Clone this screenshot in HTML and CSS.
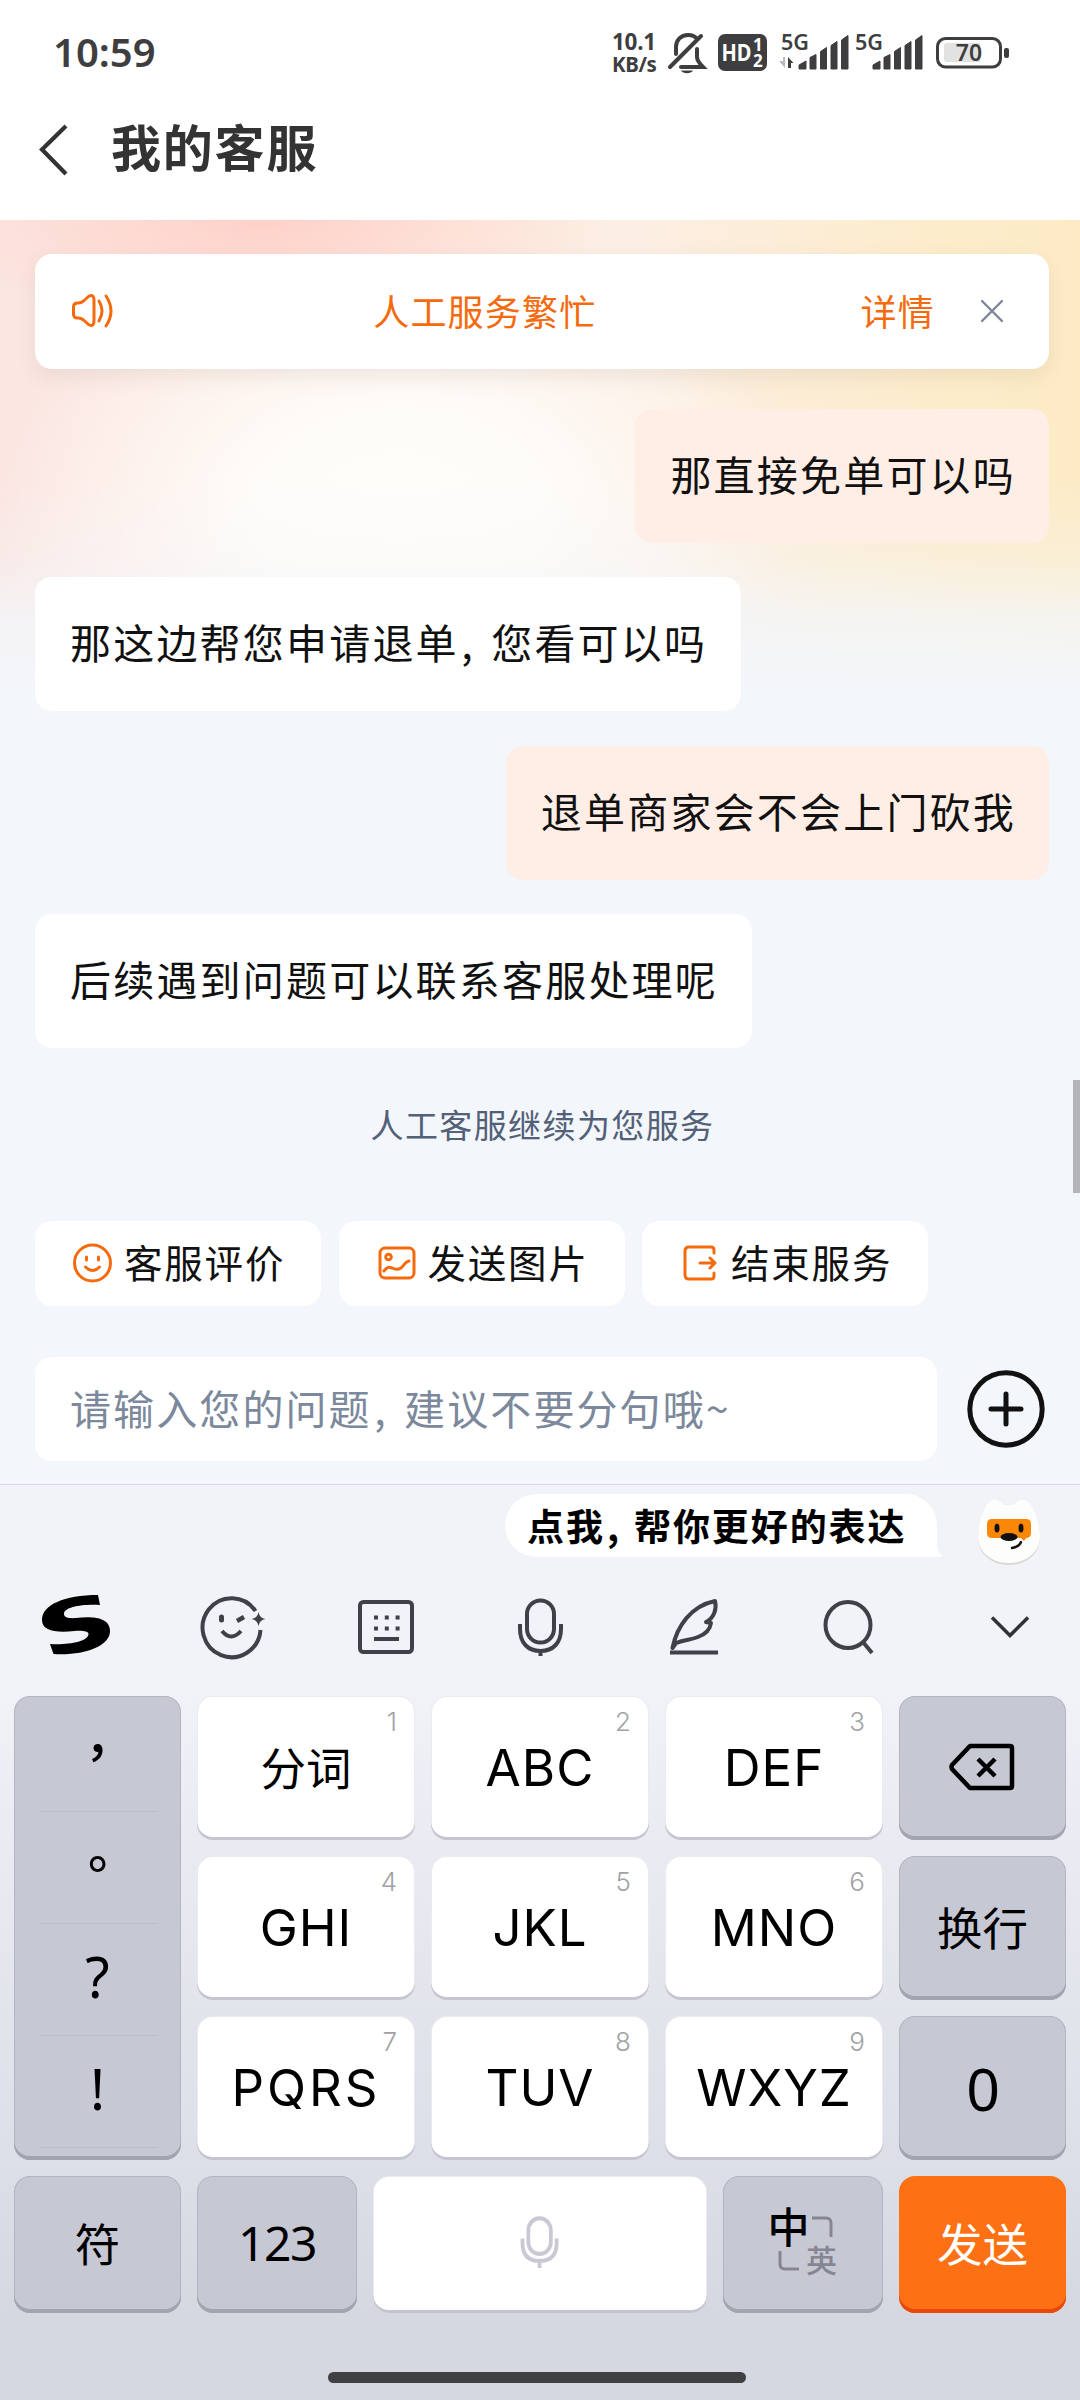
FILE: index.html
```html
<!DOCTYPE html>
<html lang="zh-CN">
<head>
<meta charset="utf-8">
<title>我的客服</title>
<link rel="stylesheet" href="styles.css">
</head>
<body>
<div class="phone">
  <div class="status">
    <span class="clock">10:59</span>
    <div class="indicators">
      <div class="speed"><span>10.1</span><span>KB/s</span></div>
      <svg class="bell" width="38" height="42" viewBox="0 0 38 42" fill="none" stroke="#3e3e40" stroke-width="4" stroke-linecap="round">
        <path d="M8 22V15C8 8 13 3 20 3c4 0 7 1 9 4M2 35 33 4M29 17v8c0 3 4 8 6 10H13"/>
        <path d="M13 38.500h12c-2 3.500-10 3.500-12 0z" fill="#3e3e40" stroke="none"/>
      </svg>
      <svg class="hd" width="49" height="37" viewBox="0 0 49 37">
        <rect width="49" height="37" rx="7" fill="#3e3e40"/>
        <g fill="#fff" font-family="Noto Sans, sans-serif" font-weight="700">
          <text x="3.500" y="27" font-size="22.500" textLength="30" lengthAdjust="spacingAndGlyphs">HD</text>
          <text x="35" y="17" font-size="17">1</text>
          <text x="35" y="33" font-size="17">2</text>
        </g>
      </svg>
      <svg class="signal" width="72" height="38" viewBox="0 0 72 38">
        <text x="2" y="17" font-size="21" textLength="28" lengthAdjust="spacingAndGlyphs" font-family="Noto Sans, sans-serif" font-weight="600" fill="#3e3e40">5G</text>
        <path d="M6 24v11l-6-7h4v-4z" fill="#bbb"/><path d="M9 35V24l5.500 6H12v5z" fill="#3e3e40"/>
        <path d="M20 32l7-4v8h-7zM31 24.500l6-3V36h-6zM41.500 18.500l6-4V36h-6zM52 12.500l6-4V36h-6zM62.500 7l6.500-4.500V36h-6.500z" fill="#3e3e40" stroke="#3e3e40" stroke-width="1" stroke-linejoin="round"/>
      </svg>
      <svg class="signal" width="74" height="38" viewBox="0 0 74 38">
        <text x="4" y="17" font-size="21" textLength="28" lengthAdjust="spacingAndGlyphs" font-family="Noto Sans, sans-serif" font-weight="600" fill="#3e3e40">5G</text>
        <path transform="translate(2 0)" d="M20 32l7-4v8h-7zM31 24.500l6-3V36h-6zM41.500 18.500l6-4V36h-6zM52 12.500l6-4V36h-6zM62.500 7l6.500-4.500V36h-6.500z" fill="#3e3e40" stroke="#3e3e40" stroke-width="1" stroke-linejoin="round"/>
      </svg>
      <svg class="battery" width="74" height="32" viewBox="0 0 74 32">
        <rect x="1.500" y="1.500" width="63" height="28.500" rx="8" fill="none" stroke="#3e3e40" stroke-width="3"/>
        <path d="M11 6h33v19H11a3 3 0 0 1-3-3V9a3 3 0 0 1 3-3z" fill="#e2e2e2"/>
        <rect x="68" y="11" width="5" height="10" rx="2" fill="#3e3e40"/>
        <text x="33" y="24" text-anchor="middle" font-size="23" font-family="Noto Sans, sans-serif" font-weight="600" fill="#3e3e40">70</text>
      </svg>
    </div>
  </div>

  <header class="nav">
    <svg width="30" height="52" viewBox="0 0 30 52" fill="none" stroke="#333" stroke-width="4.200"><path d="M28 2 4 25.500 28 50"/></svg>
    <h1>我的客服</h1>
  </header>

  <main class="chat">
    <div class="notice">
      <svg width="44" height="36" viewBox="0 0 44 36" fill="none" stroke="#f56a0c" stroke-width="3" stroke-linecap="round" stroke-linejoin="round">
        <path d="M3.500 14q0-4 4-4 3 .5 6-2l5-4.500q5.500-3 5.500 4v20q0 7-5.500 4l-5-4.500q-3-2.500-6-2-4 0-4-4z"/><path d="M29 8q6 9.500 0 20M36 3q10 15 0 30"/>
      </svg>
      <span class="notice-title">人工服务繁忙</span>
      <span class="notice-link">详情</span>
      <svg width="24" height="24" viewBox="0 0 24 24" stroke="#7b8797" stroke-width="2.400" stroke-linecap="round"><path d="M2 2 22 22M22 2 2 22"/></svg>
    </div>
    <div class="bubble mine">那直接免单可以吗</div>
    <div class="bubble">那这边帮您申请退单<i class="comma">,</i>您看可以吗</div>
    <div class="bubble mine">退单商家会不会上门砍我</div>
    <div class="bubble">后续遇到问题可以联系客服处理呢</div>
    <p class="system">人工客服继续为您服务</p>
    <div class="scrollbar"></div>
    <div class="quick">
      <div class="chip">
        <svg width="40" height="40" viewBox="0 0 40 40" fill="none" stroke="#f56a0c" stroke-width="3" stroke-linecap="round"><circle cx="20.500" cy="20" r="18"/><path d="M14.500 14v3M26.500 14v3M13.500 24q7 7 14 0"/></svg><span>客服评价</span>
      </div>
      <div class="chip">
        <svg width="40" height="40" viewBox="0 0 40 40" fill="none" stroke="#f56a0c" stroke-width="3" stroke-linecap="round" stroke-linejoin="round"><rect x="4" y="5" width="34" height="30" rx="5"/><circle cx="12.500" cy="14" r="2.800"/><path d="M8 28c4-5 5-4 8-3 4 2 6 2 9 0 4-3 3-6 8-7"/></svg><span>发送图片</span>
      </div>
      <div class="chip">
        <svg width="40" height="40" viewBox="0 0 40 40" fill="none" stroke="#f56a0c" stroke-width="3" stroke-linecap="round" stroke-linejoin="round"><path d="M35 10V7q0-3-3-3H10Q6 4 6 8v24q0 4 4 4h22q3 0 3-3v-3M21 20h15M31 15l5 5-5 5"/></svg><span>结束服务</span>
      </div>
    </div>
    <div class="compose">
      <div class="field">请输入您的问题<i class="comma">,</i>建议不要分句哦~</div>
      <svg width="78" height="78" viewBox="0 0 78 78" fill="none" stroke="#111" stroke-width="5" stroke-linecap="round"><circle cx="39" cy="39" r="36.200"/><path d="M39 24v30M24 39h30"/></svg>
    </div>
  </main>

  <section class="keyboard">
    <div class="assist">
      <div class="tip">点我<i class="comma">,</i>帮你更好的表达
        <svg class="tail" width="10" height="14" viewBox="0 0 10 14"><path d="M0 0h5q0 9 5 12.500V14H0z" fill="#fff"/></svg>
      </div>
      <svg class="mascot" width="66" height="70" viewBox="0 0 66 70">
        <path d="M8 15Q13 0 23 5l5 4h9l5-4q10-5 16 10c4 8 6 18 6 26 0 15-13 27-31 27S2 56 2 41C2 32 4 22 8 15z" fill="#d9d9d6"/>
        <path d="M8 14Q13-1 23 4l5 4h9l5-4q10-5 16 10c4 8 6 18 6 26 0 14-13 26-31 26S2 54 2 40C2 31 4 21 8 14z" fill="#fdfdfb"/>
        <path d="M16 22h34q5 0 5 5v9q0 5-5 5l-2 3-3-3H16q-5 0-5-5v-9q0-5 5-5z" fill="#fb8706"/>
        <ellipse cx="21" cy="31" rx="2.500" ry="4.500" fill="#111"/><ellipse cx="45" cy="31" rx="2.500" ry="4.500" fill="#111"/>
        <ellipse cx="33" cy="40" rx="8.500" ry="4" fill="#111"/><path d="M36 51q7-1 9-6" fill="none" stroke="#111" stroke-width="2.400" stroke-linecap="round"/>
      </svg>
    </div>

    <div class="tools">
      <svg class="brand" width="70" height="62" viewBox="0 0 70 62"><path transform="translate(1 1)" d="M56 0 58 10C40 9 22 12 22 19c0 4 6 4.500 12 4C50 21 68 22 68 36 68 52 40 61 11.500 59L8 49c18 1 38-2 38.500-10 0-3-6-3.500-14-3C14 38 0 36 0 25 0 10 22 0 56 0z"/></svg>
      <svg width="68" height="66" viewBox="0 0 68 66" fill="none" stroke="#404148" stroke-width="4"><path d="M55.500 17A29 29.500 0 1 0 60.500 36M22 37q9 11 19 0"/><path d="M21.500 23v3" stroke-width="5" stroke-linecap="round"/><path d="M37 27l7-4" stroke-width="4.500"/><path d="M58.500 18q1 6 7 7-6 1-7 7-1-6-7-7 6-1 7-7z" fill="#404148" stroke="none"/></svg>
      <svg width="58" height="56" viewBox="0 0 58 56" fill="none" stroke="#404148" stroke-width="4"><rect x="3" y="3" width="52" height="50" rx="3.500"/><path d="M17 40h25"/><path d="M17 18.500h26M17 29.500h26" stroke-dasharray="4 6.800"/></svg>
      <svg width="48" height="58" viewBox="0 0 48 58" fill="none" stroke="#404148" stroke-width="4"><rect x="10" y="2.500" width="27" height="42" rx="13.500"/><path d="M3 26v5c0 14 8 22 20.500 22S44 45 44 31v-5M23.500 52v6"/></svg>
      <svg width="50" height="58" viewBox="0 0 50 58" fill="none" stroke="#404148" stroke-width="4" stroke-linejoin="round"><path d="M1 54.500h48M3.500 50C8 28 22 8 46 3c2 8-1 17-9 21l5 1c-1 7-5 11-13 14-8 3-15 3-22 6z" /></svg>
      <svg width="52" height="56" viewBox="0 0 52 56" fill="none" stroke="#404148" stroke-width="4"><ellipse cx="25" cy="26" rx="22.500" ry="23"/><path d="M40 43l9 11"/></svg>
      <svg width="40" height="24" viewBox="0 0 40 24" fill="none" stroke="#303136" stroke-width="3.500"><path d="M2 2.500 20 20.500 38 2.500"/></svg>
    </div>

    <div class="pad">
      <div class="key grey punct"><span class="cjk">，</span><span class="cjk">。</span><span>?</span><span>!</span></div>
      <div class="key"><sup>1</sup><span class="han">分词</span></div>
      <div class="key"><sup>2</sup>ABC</div>
      <div class="key"><sup>3</sup>DEF</div>
      <div class="key grey"><svg width="66" height="50" viewBox="0 0 66 50" fill="none" stroke="#000" stroke-width="4.500" stroke-linejoin="round"><path d="M20 3h40q2 0 2 2v38q0 2-2 2H20L2 26q-1-2 0-4z"/><path d="M28 16l17 17M45 16 28 33"/></svg></div>
      <div class="key"><sup>4</sup>GHI</div>
      <div class="key"><sup>5</sup>JKL</div>
      <div class="key"><sup>6</sup>MNO</div>
      <div class="key grey"><span class="han">换行</span></div>
      <div class="key wide"><sup>7</sup>PQRS</div>
      <div class="key"><sup>8</sup>TUV</div>
      <div class="key"><sup>9</sup>WXYZ</div>
      <div class="key grey zero">0</div>
    </div>
    <div class="pad-bottom">
      <div class="key grey"><span class="han">符</span></div>
      <div class="key grey digits">123</div>
      <div class="key"><svg class="space-mic" width="40" height="52" viewBox="0 0 48 58" preserveAspectRatio="none" fill="none" stroke="#c8c9d4" stroke-width="4.500"><rect x="10" y="2.500" width="27" height="40" rx="13.500"/><path d="M3 25v5c0 14 8 20 20.500 20S44 44 44 30v-5M23.500 50v8"/></svg></div>
      <div class="key grey lang">
        <b>中</b>
        <svg width="22" height="24" viewBox="0 0 22 24" fill="none" stroke="#858692" stroke-width="3"><path d="M1 3h14q5 0 5 5v14"/></svg>
        <svg width="22" height="24" viewBox="0 0 22 24" fill="none" stroke="#858692" stroke-width="3"><path d="M2 2v13q0 5 5 5h14"/></svg>
        <small>英</small>
      </div>
      <div class="key send"><span class="han">发送</span></div>
    </div>
    <div class="home"></div>
  </section>
</div>
</body>
</html>
```
FILE: styles.css
```css
* { box-sizing: border-box; }
body { margin: 0; background: #fff; }
svg { display: block; flex: none; overflow: visible; }
i.comma { font-style: normal; display: inline-block; width: 0.79em; padding-left: 0.06em; }

.phone {
  width: 1080px;
  height: 2400px;
  display: flex;
  flex-direction: column;
  overflow: hidden;
  font-family: "Noto Sans CJK SC", "Noto Sans", sans-serif;
  color: #111;
}

/* Status bar */
.status {
  height: 100px;
  padding: 0 70px 0 53px;
  display: flex;
  align-items: flex-start;
  justify-content: space-between;
  color: #3e3e40;
}
.clock { font: 600 40px/54px "Noto Sans", sans-serif; padding-top: 25px; }
.indicators { display: flex; padding-top: 32px; }
.speed {
  display: flex;
  flex-direction: column;
  width: 56px;
  margin-top: -1px;
  font: 700 22.500px/22px "Noto Sans", sans-serif;
  letter-spacing: -0.3px;
}
.speed span:last-child { font-size: 20.500px; letter-spacing: -0.4px; }
.hd { margin: 2px 12px 0 12px; }
.signal { margin-top: 1px; }
.battery { margin: 5px 0 0 11px; }

/* Title bar */
.nav {
  height: 120px;
  padding: 0 38px;
  display: flex;
  align-items: flex-start;
}
.nav svg { margin-top: 24px; }
.nav h1 {
  margin: 8px 0 0 43px;
  font-size: 50px;
  line-height: 74px;
  font-weight: 600;
  letter-spacing: 1.800px;
  color: #333;
}

/* Conversation */
.chat {
  height: 1264px;
  padding: 34px 31px 0 35px;
  display: flex;
  flex-direction: column;
  align-items: flex-start;
  position: relative;
  background:
    linear-gradient(to bottom, rgba(243,246,250,0) 260px, rgba(243,246,250,.3) 340px, rgba(243,246,250,.8) 400px, #f3f6fa 470px),
    radial-gradient(ellipse 340px 110px at 260px 0, #fed1c8 0, rgba(254,209,200,0) 100%),
    radial-gradient(ellipse 400px 290px at 400px 300px, #fffdfa 0, #fefcf9 35%, rgba(254,250,245,0) 100%),
    linear-gradient(to right, #fbe6e2 0, #fdeae3 20%, #fceee2 60%, #fdecca 88%, #fdebc6 100%);
  background-color: #f3f6fa;
}
.notice {
  width: 1014px;
  height: 115px;
  padding: 0 45px 2px 35px;
  border-radius: 17px;
  background: #fff;
  box-shadow: 0 8px 20px rgba(110,90,70,.1);
  display: flex;
  align-items: center;
  margin-bottom: 40px;
  color: #f56a0c;
  font-size: 36px;
  letter-spacing: 1.200px;
}
.notice-title, .notice-link { padding-bottom: 2px; }
.notice-title { flex: 1; text-align: center; padding-right: 5px; }
.notice-link { margin-right: 45px; }
.bubble {
  height: 134px;
  padding: 0 34px 0 35px;
  margin-bottom: 34.300px;
  border-radius: 17px;
  background: #fff;
  font-size: 41px;
  line-height: 128px;
  letter-spacing: 2.200px;
  white-space: nowrap;
}
.mine { align-self: flex-end; padding-right: 33px; background: #ffeee5; }
.system {
  align-self: center;
  margin: 18px 0 0 1px;
  font-size: 33px;
  line-height: 48px;
  letter-spacing: 1.400px;
  color: #526078;
}
.scrollbar {
  position: absolute;
  right: 0;
  top: 860px;
  width: 7px;
  height: 113px;
  background: #b2b4b7;
}
.quick { display: flex; gap: 17.500px; margin-top: 72.500px; }
.chip {
  width: 286px;
  height: 85px;
  padding-left: 37px;
  border-radius: 17px;
  background: #fff;
  display: flex;
  align-items: center;
  gap: 12px;
  font-size: 38.500px;
  letter-spacing: 1.800px;
}
.chip span { padding-bottom: 4px; }
.compose { display: flex; align-items: center; gap: 30px; margin-top: 51px; }
.field {
  width: 902px;
  height: 104px;
  padding-left: 35px;
  border-radius: 17px;
  background: #fff;
  font-size: 41px;
  line-height: 100px;
  letter-spacing: 2.100px;
  color: #7c889b;
}

/* Keyboard */
.keyboard {
  height: 916px;
  border-top: 1px solid #d5d8df;
  display: flex;
  flex-direction: column;
  background: linear-gradient(to bottom, #f1f3f8 0, #f1f3f8 200px, #e9eaf2 370px, #dde0e8 660px, #d5d8e1 830px, #d5d8e1 100%);
}
.assist {
  height: 95px;
  padding: 9px 38px 0 505px;
  display: flex;
  align-items: flex-start;
  justify-content: space-between;
}
.tip {
  position: relative;
  width: 432px;
  height: 63px;
  padding-left: 22px;
  border-radius: 32px 32px 0 32px;
  background: #fff;
  color: #000;
  font-size: 37px;
  line-height: 62px;
  font-weight: 600;
  letter-spacing: 1.900px;
  white-space: nowrap;
}
.tail { position: absolute; left: 427px; bottom: 0; }
.mascot { margin-top: 3px; }
.tools {
  height: 116px;
  padding: 0 50px 22px 41px;
  display: grid;
  grid-template-columns: 159px 157px 160px 152px 154px 167px 40px;
  align-items: center;
}
.brand { margin-bottom: 4px; }
.pad {
  display: grid;
  grid-template-columns: 167px repeat(3, 218px) 167px;
  grid-auto-rows: 144px;
  gap: 16px 16px;
  padding: 0 14px;
  justify-content: space-between;
}
.pad-bottom {
  display: grid;
  grid-template-columns: 167px 160px 334px 160px 167px;
  grid-auto-rows: 137px;
  padding: 16px 14px 0;
  justify-content: space-between;
}
.key {
  position: relative;
  border-radius: 16px;
  background: #fff;
  box-shadow: inset 0 -3px 0 #c4c5d1, inset 0 0 0 1px rgba(140,142,160,.18);
  display: flex;
  align-items: center;
  justify-content: center;
  color: #000;
  font: 400 51px/60px Inter, sans-serif;
  letter-spacing: 1px;
}
.wide { letter-spacing: 3px; }
.key sup {
  position: absolute;
  right: 18px;
  top: 13px;
  font: 300 26px/26px Inter, sans-serif;
  letter-spacing: 0;
  color: #a2a2a6;
}
.grey { background: #c6c8d4; box-shadow: inset 0 -4px 0 #a2a4b1, inset 0 0 0 1px rgba(120,122,145,.25); }
.han { font-family: "Noto Sans CJK SC", sans-serif; font-size: 45.500px; letter-spacing: 0; padding-bottom: 5px; }
.punct {
  grid-row: span 3;
  flex-direction: column;
  justify-content: flex-start;
  padding-top: 4px;
  font-family: "Noto Sans", sans-serif;
  font-size: 56px;
  letter-spacing: 0;
}
.punct span {
  width: 118px;
  height: 112px;
  line-height: 104px;
  text-align: center;
  border-bottom: 1px solid #bcbeca;
}
.punct .cjk { font-family: "Noto Sans CJK TC", sans-serif; font-size: 50px; line-height: 99px; font-weight: 500; }
.zero { font-family: "Noto Sans", sans-serif; font-size: 59px; padding-left: 2px; }
.digits { font-family: "Noto Sans", sans-serif; font-size: 48px; letter-spacing: -1.500px; padding-bottom: 4px; }
.space-mic { margin-bottom: 6px; }
.lang {
  display: grid;
  grid-template-columns: 40px 26px;
  grid-template-rows: 38px 30px;
  place-content: center;
  place-items: center;
  padding: 0 3px 6px 0;
  letter-spacing: 0;
  font-family: "Noto Sans CJK SC", sans-serif;
}
.lang b { font-size: 42px; font-weight: 500; line-height: 36px; padding-bottom: 4px; }
.lang small { font-size: 31px; line-height: 26px; padding-bottom: 4px; color: #858692; font-weight: 500; }
.send {
  background: #fd7014;
  color: #fff;
  box-shadow: inset 0 -4px 0 #e8480c;
}
.home { width: 418px; height: 11px; border-radius: 6px; background: #3e4042; margin: 59px 0 0 328px; }
```
